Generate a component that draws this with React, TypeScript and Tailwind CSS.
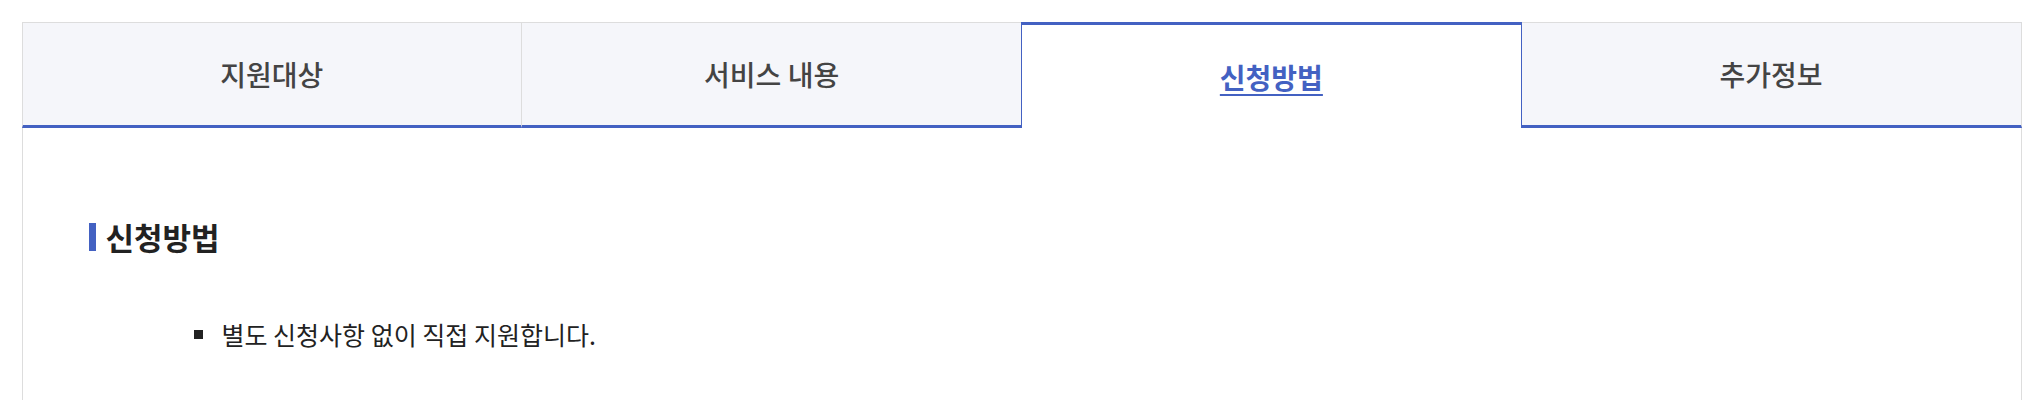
import React from 'react';

const tabs = ['지원대상', '서비스 내용', '신청방법', '추가정보'];

export default function App() {
  const active = 2;

  return (
    <div className="min-h-screen bg-white pt-[22px] font-['Noto_Sans_CJK_KR','Noto_Sans',sans-serif]">
      <div className="mx-auto w-[2000px]">
        {/* Tabs */}
        <ul className="flex">
          {tabs.map((label, idx) => {
            const isActive = idx === active;
            if (isActive) {
              return (
                <li
                  key={label}
                  className="flex h-[106px] flex-1 items-center justify-center border-x border-t-[3px] border-[#4361c2] bg-white"
                >
                  <a className="text-[28px] font-bold text-[#4361c2] underline underline-offset-[5px]">
                    {label}
                  </a>
                </li>
              );
            }
            return (
              <li
                key={label}
                className={`flex h-[106px] flex-1 items-center justify-center border-t border-b-[3px] border-t-[#dddddd] border-b-[#4361c2] bg-[#f5f6fa] ${
                  idx === 0 || idx === 1 ? 'border-l border-l-[#dddddd]' : ''
                } ${idx === tabs.length - 1 ? 'border-r border-r-[#dddddd]' : ''}`}
              >
                <a className="text-[28px] font-medium text-[#444444]">{label}</a>
              </li>
            );
          })}
        </ul>

        {/* Panel */}
        <div className="border-x border-[#dddddd] px-[66px] pt-[88px] pb-[120px]">
          <h3 className="flex items-center gap-[10px] text-[31px] leading-[42px] font-bold text-[#222222]">
            <span className="h-[28px] w-[7px] bg-[#4361c2]" />
            신청방법
          </h3>
          <ul className="mt-[59px] pl-[105px]">
            <li className="flex items-center text-[25px] leading-[35px] text-[#222222]">
              <span className="mr-[19px] h-[9px] w-[9px] bg-[#222222]" />
              별도 신청사항 없이 직접 지원합니다.
            </li>
          </ul>
        </div>
      </div>
    </div>
  );
}
